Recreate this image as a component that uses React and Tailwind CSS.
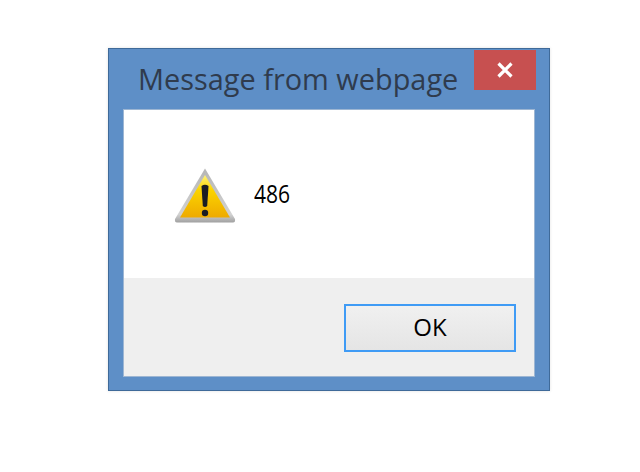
import React from 'react';

function WarningIcon() {
  return (
    <svg width="64" height="58" viewBox="0 0 64 58" className="block">
      <defs>
        <linearGradient id="warnFill" x1="0" y1="0" x2="0" y2="1">
          <stop offset="0" stopColor="#fff27a" />
          <stop offset="0.35" stopColor="#fbd400" />
          <stop offset="1" stopColor="#eeaa00" />
        </linearGradient>
        <linearGradient id="warnEdge" x1="0" y1="0" x2="0" y2="1">
          <stop offset="0" stopColor="#b5b5b5" />
          <stop offset="0.85" stopColor="#d2d2d2" />
          <stop offset="1" stopColor="#a0a0a0" />
        </linearGradient>
      </defs>
      <path d="M32 1.500 L62 52 Q62.500 55.500 60 55.500 L4 55.500 Q1.500 55.500 2 52 Z" fill="url(#warnEdge)" />
      <path d="M32 8 L57 50.500 L7 50.500 Z" fill="url(#warnFill)" />
      <path d="M28.500 19 Q32 16.500 35.500 19 L34.200 39 Q32 41 29.800 39 Z" fill="#1a1c24" />
      <circle cx="32" cy="46" r="3.200" fill="#1a1c24" />
    </svg>
  );
}

export default function App() {
  return (
    <div className="w-[640px] h-[472px] bg-white pt-[48px] pl-[108px] overflow-hidden">
      {/* Dialog window */}
      <div className="relative w-[442px] h-[343px] flex flex-col bg-[#5e8fc7] border border-[#3f6a99] shadow-[0_0_3px_rgba(0,0,0,0.12)] px-[14px] pb-[13px]">
        {/* Title bar */}
        <div className="h-[60px] shrink-0 flex items-center pl-[15px] pt-[1px]">
          <span className="text-[28.9px] leading-none text-[#2f3b4d] font-['Open_Sans','Noto_Sans',sans-serif]">
            Message from webpage
          </span>
        </div>

        <button className="absolute top-[1px] right-[13px] w-[62px] h-[40px] flex items-center justify-center bg-[#c75050]">
          <svg width="18" height="16" viewBox="0 0 18 16">
            <path d="M2.500 1.500 L15.500 14.500 M15.500 1.500 L2.500 14.500" stroke="#fff" strokeWidth="3.200" />
          </svg>
        </button>

        {/* Body */}
        <div className="flex-1 flex flex-col bg-white border border-[#9db6d3]">
          <div className="h-[168px] shrink-0 flex items-start pl-[49px] pt-[57px]">
            <WarningIcon />
            <span className="ml-[17px] mt-[10px] text-[26px] leading-[32px] text-black scale-x-[0.81] origin-left font-['Open_Sans','Noto_Sans',sans-serif]">
              486
            </span>
          </div>

          {/* Footer */}
          <div className="flex-1 flex justify-end items-start bg-[#efefef] pt-[26px] pr-[18px]">
            <button className="w-[172px] h-[48px] pb-[2px] flex items-center justify-center border-2 border-[#3f9bf5] bg-gradient-to-b from-[#f0f0f0] to-[#e5e5e5] text-[24px] text-black font-['Open_Sans','Noto_Sans',sans-serif]">
              OK
            </button>
          </div>
        </div>
      </div>
    </div>
  );
}
